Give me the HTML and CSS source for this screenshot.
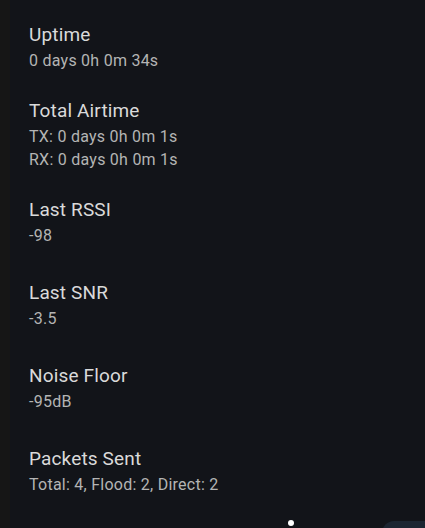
FILE: index.html
```html
<!DOCTYPE html>
<html>
<head>
    <meta name="viewport" content="width=device-width, initial-scale=1.0">
    <link rel="stylesheet" href="styles.css">
</head>
<body>
    <div class="screen">
        <div class="edge"></div>
        <div class="stats-list">
            <div class="stat-item">
                <div class="stat-title">Uptime</div>
                <div class="stat-value">0 days 0h 0m 34s</div>
            </div>
            <div class="stat-item">
                <div class="stat-title">Total Airtime</div>
                <div class="stat-value">TX: 0 days 0h 0m 1s</div>
                <div class="stat-value">RX: 0 days 0h 0m 1s</div>
            </div>
            <div class="stat-item">
                <div class="stat-title">Last RSSI</div>
                <div class="stat-value">-98</div>
            </div>
            <div class="stat-item">
                <div class="stat-title">Last SNR</div>
                <div class="stat-value">-3.5</div>
            </div>
            <div class="stat-item">
                <div class="stat-title">Noise Floor</div>
                <div class="stat-value">-95dB</div>
            </div>
            <div class="stat-item">
                <div class="stat-title">Packets Sent</div>
                <div class="stat-value">Total: 4, Flood: 2, Direct: 2</div>
            </div>
        </div>
        <div class="scroll-dot"></div>
        <div class="fab-corner"></div>
    </div>
</body>
</html>
```
FILE: styles.css
```css
body {
    margin: 0;
    background: #121419;
    font-family: Roboto, "Noto Sans", sans-serif;
}
.screen {
    position: relative;
    display: flex;
    height: 528px;
    overflow: hidden;
}
.edge {
    width: 10px;
    background: #161616;
}
.stats-list {
    flex: 1;
    padding: 6px 0 0 19px;
}
.stat-item {
    display: flex;
    flex-direction: column;
    justify-content: center;
    min-height: 83px;
    padding: 10px 0;
    box-sizing: border-box;
}
.stat-title {
    color: #dadada;
    font-size: 19px;
    line-height: 24px;
    letter-spacing: 0.15px;
    margin-bottom: 2px;
}
.stat-value {
    color: #b4b4b4;
    font-size: 16px;
    line-height: 23px;
    letter-spacing: 0.25px;
}
.scroll-dot {
    position: absolute;
    left: 288px;
    top: 520px;
    width: 6px;
    height: 6px;
    border-radius: 50%;
    background: #fff;
}
.fab-corner {
    position: absolute;
    left: 382px;
    top: 521px;
    width: 80px;
    height: 60px;
    border-radius: 12px;
    background: #1c2531;
}
```
